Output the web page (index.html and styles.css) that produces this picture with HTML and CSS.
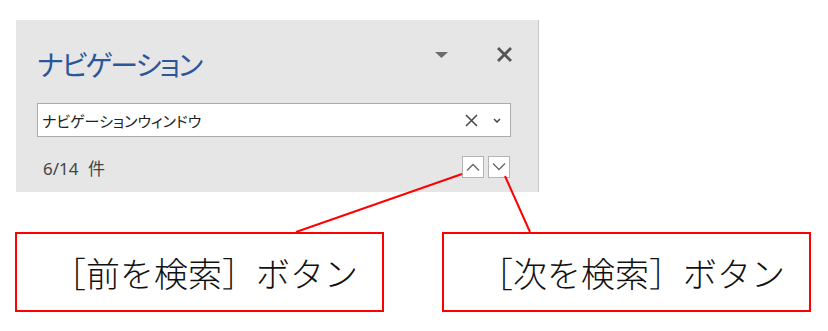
FILE: index.html
```html
<!DOCTYPE html>
<html lang="ja">

<head>
    <meta charset="UTF-8">
    <meta name="viewport" content="width=device-width, initial-scale=1.0">
    <title>ナビゲーション - 検索ボタン</title>
    <link rel="stylesheet" href="styles.css">
</head>

<body>
    <!-- ナビゲーションウィンドウ -->
    <div class="panel">
        <div class="head">
            <h2 class="title">ナビゲーション</h2>
            <span class="menu-arrow">
                <svg width="13" height="6" viewBox="0 0 13 6"><path d="M0 0H13L6.5 6Z" fill="#6b6b6b"/></svg>
            </span>
            <span class="close">
                <svg width="15" height="15" viewBox="0 0 15 15"><path d="M2 2L13 13M13 2L2 13" stroke="#555" stroke-width="2.8" stroke-linecap="square"/></svg>
            </span>
        </div>

        <div class="search">
            <span class="search-text">ナビゲーションウィンドウ</span>
            <span class="clear">
                <svg width="13" height="13" viewBox="0 0 13 13"><path d="M1 1L12 12M12 1L1 12" stroke="#444" stroke-width="1.5"/></svg>
            </span>
            <span class="more">
                <svg width="8" height="5" viewBox="0 0 8 5"><path d="M1 1L4 4L7 1" stroke="#444" stroke-width="1.5" fill="none"/></svg>
            </span>
        </div>

        <div class="result">
            <span class="count">6/14 件</span>
            <button class="nav-btn" title="前を検索">
                <svg width="14" height="8" viewBox="0 0 14 8"><path d="M1 7.5L7 1.5L13 7.5" stroke="#666" stroke-width="1.3" fill="none"/></svg>
            </button>
            <button class="nav-btn" title="次を検索">
                <svg width="14" height="8" viewBox="0 0 14 8"><path d="M1 0.5L7 6.5L13 0.5" stroke="#666" stroke-width="1.3" fill="none"/></svg>
            </button>
        </div>
    </div>

    <!-- 説明ラベル -->
    <div class="callouts">
        <div class="callout">［前を検索］ボタン</div>
        <div class="callout">［次を検索］ボタン</div>
    </div>

    <!-- 引き出し線 -->
    <svg class="leaders" width="828" height="331" viewBox="0 0 828 331">
        <line x1="462" y1="174" x2="296" y2="232" stroke="#ff0000" stroke-width="2"/>
        <line x1="505" y1="176" x2="530" y2="232" stroke="#ff0000" stroke-width="2"/>
    </svg>
</body>

</html>
```

FILE: styles.css
```css
body {
    margin: 0;
    background-color: #fff;
    font-family: "Noto Sans CJK JP", sans-serif;
    position: relative;
    width: 828px;
    height: 331px;
    overflow: hidden;
}

.panel {
    box-sizing: border-box;
    width: 523px;
    height: 172px;
    margin: 20px 0 0 16px;
    padding: 0 27px 0 21px;
    background-color: #e6e6e6;
    border-right: 1px solid #c8c8c8;
}

.head {
    display: flex;
    align-items: flex-start;
    height: 40px;
    padding-top: 24px;
}

.title {
    flex: 1;
    margin: 0;
    font-size: 28px;
    font-weight: 400;
    line-height: 40px;
    color: #2b579a;
    font-feature-settings: "palt";
    letter-spacing: -2px;
}

.menu-arrow {
    display: flex;
    margin-top: 8px;
}

.close {
    display: flex;
    margin: 3px -1px 0 49px;
}

.search {
    display: flex;
    align-items: center;
    box-sizing: border-box;
    height: 34px;
    margin-top: 19px;
    padding: 0 9px 0 4px;
    background-color: #fff;
    border: 1px solid #ababab;
}

.search-text {
    flex: 1;
    font-size: 15px;
    color: #222;
    font-feature-settings: "palt";
}

.clear {
    display: flex;
    margin-right: 15px;
}

.more {
    display: flex;
}

.result {
    display: flex;
    align-items: center;
    gap: 4px;
    height: 22px;
    margin-top: 19px;
    padding: 0 1px 0 6px;
}

.count {
    flex: 1;
    font-family: "Noto Sans", "Noto Sans CJK JP", sans-serif;
    font-size: 17px;
    word-spacing: 5px;
    color: #444;
}

.nav-btn {
    display: flex;
    align-items: center;
    justify-content: center;
    box-sizing: border-box;
    width: 22px;
    height: 22px;
    padding: 0;
    background-color: #fff;
    border: 1px solid #b4b4b4;
}

.callouts {
    display: flex;
    gap: 58px;
    margin: 40px 0 0 15px;
}

.callout {
    display: flex;
    align-items: center;
    box-sizing: border-box;
    width: 369px;
    height: 80px;
    padding-left: 35px;
    border: 2px solid #ff0000;
    font-size: 34px;
    font-weight: 300;
    color: #111;
}

.leaders {
    position: absolute;
    top: 0;
    left: 0;
    pointer-events: none;
}
```
